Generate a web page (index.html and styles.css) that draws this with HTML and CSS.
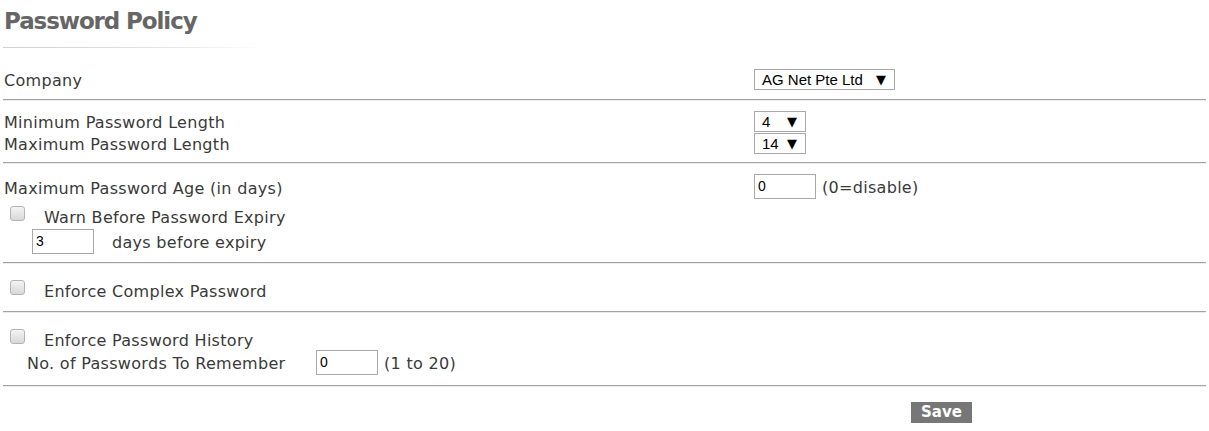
FILE: index.html
```html
<!DOCTYPE html>
<html>
<head>
<meta charset="utf-8">
<link rel="stylesheet" href="styles.css">
<title>Password Policy</title>
</head>
<body>
<div class="page">
  <h1 class="title">Password Policy</h1>
  <div class="title-rule"></div>

  <div class="section sec-company">
    <div class="row r22">
      <div class="label">Company</div>
      <div class="field"><div class="sel sel-wide"><span>AG Net Pte Ltd</span><span class="arrow">▼</span></div></div>
    </div>
  </div>
  <div class="divider"></div>

  <div class="section sec-length">
    <div class="row r22">
      <div class="label">Minimum Password Length</div>
      <div class="field"><div class="sel sel-small"><span>4</span><span class="arrow">▼</span></div></div>
    </div>
    <div class="row r22">
      <div class="label">Maximum Password Length</div>
      <div class="field"><div class="sel sel-small"><span>14</span><span class="arrow">▼</span></div></div>
    </div>
  </div>
  <div class="divider"></div>

  <div class="section sec-age">
    <div class="row r25">
      <div class="label">Maximum Password Age (in days)</div>
      <div class="field"><div class="inp">0</div><span class="note">(0=disable)</span></div>
    </div>
    <div class="check-row">
      <span class="cb"></span><span class="cb-label">Warn Before Password Expiry</span>
    </div>
    <div class="sub-row sub-days">
      <div class="inp">3</div><span class="sub-text days">days before expiry</span>
    </div>
  </div>
  <div class="divider"></div>

  <div class="section sec-complex">
    <div class="check-row">
      <span class="cb"></span><span class="cb-label">Enforce Complex Password</span>
    </div>
  </div>
  <div class="divider"></div>

  <div class="section sec-history">
    <div class="check-row">
      <span class="cb"></span><span class="cb-label">Enforce Password History</span>
    </div>
    <div class="sub-row sub-remember">
      <span class="sub-text remember">No. of Passwords To Remember</span><div class="inp">0</div><span class="note">(1 to 20)</span>
    </div>
  </div>
  <div class="divider"></div>

  <div class="actions">
    <div class="spacer"></div>
    <div class="field"><button class="save">Save</button></div>
  </div>
</div>
</body>
</html>
```

FILE: styles.css
```css
html, body {
  margin: 0;
  padding: 0;
  background: #fff;
}
.page {
  padding: 0 3px;
  font-family: "DejaVu Sans", Verdana, sans-serif;
  font-size: 16px;
  letter-spacing: 0.3px;
  color: #3a3a3a;
}
.title {
  margin: 0;
  padding-top: 8px;
  height: 26px;
  line-height: 26px;
  font-size: 23px;
  letter-spacing: -1.1px;
  font-weight: bold;
  color: #666;
  padding-left: 1px;
}
.title-rule {
  margin-top: 13px;
  width: 262px;
  height: 1px;
  background: linear-gradient(to right, #d0d0d0 0%, #e4e4e4 60%, #ffffff 100%);
}
.divider {
  height: 0;
  border-top: 1px solid #a3a3a3;
  border-bottom: 1px solid #ececec;
}
.row {
  display: grid;
  grid-template-columns: 751px 1fr;
  align-items: center;
}
.r22 { height: 22px; }
.r25 { height: 25px; }
.label {
  padding-left: 1px;
  padding-top: 3px;
}
.field {
  display: flex;
  align-items: center;
}
.sec-company { padding: 20px 0 9px; }
.sec-length { padding: 9px 0 8px; }
.sec-age { padding: 10px 0 8px; }
.sec-complex { padding: 14px 0 9px; }
.sec-history { padding: 14px 0 10px; }

.sel {
  box-sizing: border-box;
  height: 21px;
  border: 1px solid #a9a9a9;
  display: flex;
  align-items: center;
  justify-content: space-between;
  font-family: "Liberation Sans", Arial, sans-serif;
  font-size: 15px;
  letter-spacing: 0;
  color: #000;
  padding: 0 8px 0 7px;
}
.sel-wide { width: 141px; }
.sel-small { width: 52px; }
.arrow {
  font-size: 13px;
  font-family: "DejaVu Sans", sans-serif;
}
.inp {
  box-sizing: border-box;
  width: 62px;
  height: 25px;
  border: 1px solid #a9a9a9;
  font-family: "Liberation Sans", Arial, sans-serif;
  font-size: 14px;
  letter-spacing: 0;
  color: #000;
  line-height: 23px;
  padding-left: 3px;
}
.note {
  margin-left: 6px;
  padding-top: 1px;
}
.check-row {
  display: flex;
  align-items: flex-start;
  height: 24px;
}
.cb {
  box-sizing: border-box;
  width: 15px;
  height: 15px;
  margin: 2px 0 0 7px;
  border: 1px solid #b4b4b4;
  border-radius: 3px;
  background: linear-gradient(#f4f4f4, #d8d8d8);
}
.cb-label {
  margin-left: 19px;
  line-height: 24px;
  margin-top: 2px;
}
.sec-age .check-row { margin-top: 5px; }
.sub-row {
  display: flex;
  align-items: center;
  height: 25px;
}
.sub-days {
  padding-left: 29px;
  margin-top: 1px;
}
.sub-text { padding-top: 1px; }
.days { margin-left: 18px; }
.sub-remember {
  padding-left: 24px;
  margin-top: -1px;
}
.remember { width: 289px; }
.actions {
  display: grid;
  grid-template-columns: 751px 1fr;
  padding-top: 15px;
}
.save {
  margin-left: 157px;
  width: 61px;
  height: 21px;
  border: none;
  background: #777;
  color: #fff;
  font-family: "DejaVu Sans", Verdana, sans-serif;
  font-weight: bold;
  font-size: 15px;
  padding: 0;
  line-height: 21px;
}
```
